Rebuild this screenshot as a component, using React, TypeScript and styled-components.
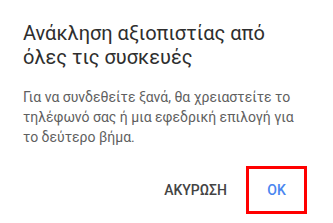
import React from 'react';
import styled, { createGlobalStyle } from 'styled-components';

const Global = createGlobalStyle`
    html, body {
        margin: 0;
        padding: 0;
        background: #ffffff;
    }
    body {
        font-family: Roboto, "Noto Sans", sans-serif;
    }
`;

const Dialog = styled.div`
    width: 333px;
    height: 223px;
    box-sizing: border-box;
    padding: 21px 26px 0 23px;
    display: flex;
    flex-direction: column;
    background: #ffffff;
`;

const Title = styled.h2`
    margin: 0;
    font-size: 20px;
    line-height: 24px;
    font-weight: 400;
    color: #2e2e2e;
`;

const Body = styled.p`
    margin: 18px 0 0;
    font-size: 14px;
    line-height: 20px;
    font-weight: 400;
    color: #5f5f5f;
`;

const Actions = styled.div`
    display: flex;
    justify-content: flex-end;
    align-items: center;
    gap: 8px;
    margin-top: 19px;
`;

const Button = styled.button<{ $primary?: boolean; $highlight?: boolean }>`
    height: 48px;
    box-sizing: border-box;
    padding: 0 8px;
    min-width: ${(p) => (p.$highlight ? '61px' : 'auto')};
    border: ${(p) => (p.$highlight ? '3px solid #ff0000' : '3px solid transparent')};
    background: transparent;
    font-family: Roboto, "Noto Sans", sans-serif;
    font-size: 14px;
    font-weight: 500;
    text-transform: uppercase;
    color: ${(p) => (p.$primary ? '#4a86f0' : '#444444')};
    cursor: pointer;
`;

const App = () => {
    return (
        <>
            <Global />
            <Dialog>
                <Title>Ανάκληση αξιοπιστίας από όλες τις συσκευές</Title>
                <Body>
                    Για να συνδεθείτε ξανά, θα χρειαστείτε το τηλέφωνό σας ή μια εφεδρική επιλογή για
                    το δεύτερο βήμα.
                </Body>
                <Actions>
                    <Button>ΑΚΥΡΩΣΗ</Button>
                    <Button $primary $highlight>
                        OK
                    </Button>
                </Actions>
            </Dialog>
        </>
    );
};

export default App;
